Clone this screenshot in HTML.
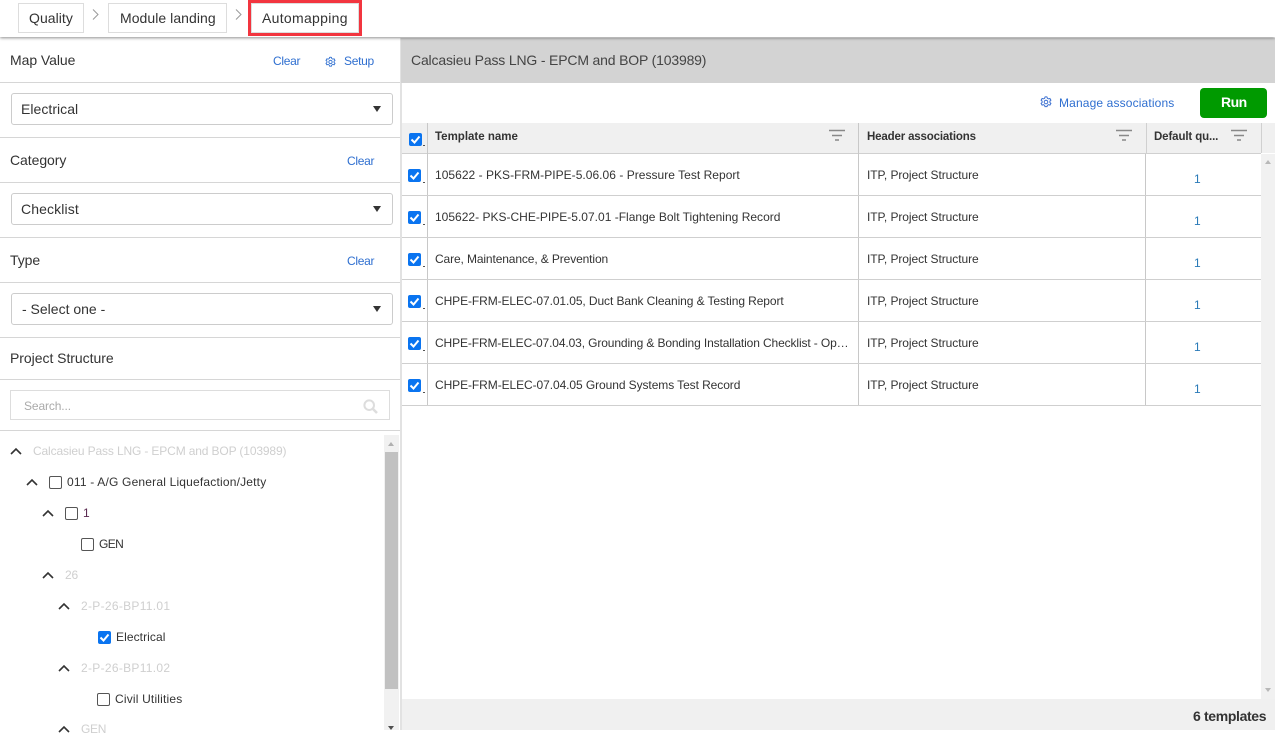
<!DOCTYPE html>
<html><head><meta charset="utf-8"><style>
html,body{margin:0;padding:0;background:#fff}
body{width:1275px;height:730px;position:relative;overflow:hidden;font-family:"Liberation Sans",sans-serif;color:#333}
.a,.t,.l{position:absolute}
.t{white-space:nowrap;line-height:16px;height:16px}
.s14{font-size:14px;letter-spacing:-.06px}
.s12{font-size:12px;letter-spacing:-.12px}
.g{color:#cfcfcf}
.bl{color:#2f6fd0}
.l{background:#d6d6d6;height:1px}
.bc{position:absolute;top:3px;height:28px;border:1px solid #ddd;background:#fff}
.sel{position:absolute;left:11px;width:380px;height:30px;border:1px solid #ccc;border-radius:3px}
.tri{position:absolute;width:0;height:0;border-left:4px solid transparent;border-right:4px solid transparent;border-top:6px solid #333}
.cb{position:absolute;width:11px;height:11px;border:1px solid #555;border-radius:2px;background:#fff}
.ck{position:absolute;width:13px;height:13px;background:#0a74f0;border-radius:2px}
.ck svg{position:absolute;left:0;top:0}
.dots{position:absolute;width:2px;height:1px;background:#555}
svg{position:absolute;overflow:visible}
</style></head><body>

<!-- Left panel -->
<div class="t s14" style="left:10px;top:52px">Map Value</div>
<div class="t s12 bl" style="left:273px;top:53px;letter-spacing:-.3px">Clear</div>
<svg style="left:325px;top:56px" width="11" height="12" viewBox="0 0 12 12" fill="none" stroke="#2f6fd0" stroke-width="1"><path d="M6 .8l1 .2.4 1.3 1.2.6 1.3-.4 1 1.7-1 .9v1.4l1 .9-1 1.7-1.3-.4-1.2.6-.4 1.3H5l-.4-1.3-1.2-.6-1.3.4-1-1.7 1-.9V5.1l-1-.9 1-1.7 1.3.4 1.2-.6L5 1z"/><circle cx="6" cy="6" r="1.8"/></svg>
<div class="t s12 bl" style="left:344px;top:53px;letter-spacing:-.3px">Setup</div>
<div class="l" style="left:0;top:82px;width:400px"></div>
<div class="sel" style="top:93px"></div>
<div class="t s14" style="left:21px;top:101px;letter-spacing:.04px">Electrical</div>
<div class="tri" style="left:373px;top:106px"></div>
<div class="l" style="left:0;top:137px;width:400px"></div>
<div class="t s14" style="left:10px;top:152px">Category</div>
<div class="t s12 bl" style="left:347px;top:153px;letter-spacing:-.3px">Clear</div>
<div class="l" style="left:0;top:182px;width:400px"></div>
<div class="sel" style="top:193px"></div>
<div class="t s14" style="left:21px;top:201px;letter-spacing:.12px">Checklist</div>
<div class="tri" style="left:373px;top:206px"></div>
<div class="l" style="left:0;top:237px;width:400px"></div>
<div class="t s14" style="left:10px;top:252px">Type</div>
<div class="t s12 bl" style="left:347px;top:253px;letter-spacing:-.3px">Clear</div>
<div class="l" style="left:0;top:282px;width:400px"></div>
<div class="sel" style="top:293px"></div>
<div class="t s14" style="left:22px;top:301px;letter-spacing:0">- Select one -</div>
<div class="tri" style="left:373px;top:306px"></div>
<div class="l" style="left:0;top:337px;width:400px"></div>
<div class="t s14" style="left:10px;top:350px;letter-spacing:-.04px">Project Structure</div>
<div class="l" style="left:0;top:379px;width:400px"></div>
<div class="a" style="left:10px;top:390px;width:378px;height:28px;border:1px solid #ddd"></div>
<div class="t s12" style="left:24px;top:398px;color:#aaa">Search...</div>
<svg style="left:363px;top:399px" width="15" height="15" viewBox="0 0 15 15" fill="none" stroke="#ddd" stroke-width="2"><circle cx="6.200" cy="6.200" r="4.800"/><path d="M10 10l4 4" stroke-width="2.600"/></svg>
<div class="l" style="left:0;top:430px;width:400px"></div>

<!-- tree -->
<svg style="left:0;top:0" width="400" height="730" fill="none" stroke="#333" stroke-width="1.6"><path d="M11 454l5-5 5 5M27 485l5-5 5 5M43 516l5-5 5 5M43 578l5-5 5 5M59 609l5-5 5 5M59 671l5-5 5 5M59 732l5-5 5 5"/></svg>
<div class="t s12 g" style="left:33px;top:443px;letter-spacing:-.14px">Calcasieu Pass LNG - EPCM and BOP (103989)</div>
<div class="cb" style="left:49px;top:476px"></div>
<div class="t s12" style="left:67px;top:474px;letter-spacing:.19px">011 - A/G General Liquefaction/Jetty</div>
<div class="cb" style="left:65px;top:507px"></div>
<div class="t s12" style="left:83px;top:505px;color:#5a2a50">1</div>
<div class="cb" style="left:81px;top:538px"></div>
<div class="t s12" style="left:99px;top:536px;letter-spacing:-.6px">GEN</div>
<div class="t s12 g" style="left:65px;top:567px">26</div>
<div class="t s12 g" style="left:81px;top:598px;letter-spacing:.3px">2-P-26-BP11.01</div>
<div class="ck" style="left:98px;top:631px"><svg width="13" height="13" fill="none" stroke="#fff" stroke-width="2"><path d="M2.500 6.500l3 3 5-6"/></svg></div>
<div class="t s12" style="left:116px;top:629px;letter-spacing:.08px">Electrical</div>
<div class="t s12 g" style="left:81px;top:660px;letter-spacing:.3px">2-P-26-BP11.02</div>
<div class="cb" style="left:97px;top:693px"></div>
<div class="t s12" style="left:115px;top:691px;letter-spacing:.18px">Civil Utilities</div>
<div class="t s12 g" style="left:81px;top:721px;letter-spacing:-.3px">GEN</div>
<div class="a" style="left:384px;top:435px;width:15px;height:295px;background:#f1f1f1"></div>
<div class="a" style="left:385px;top:452px;width:13px;height:237px;background:#c1c1c1"></div>
<div class="a" style="left:388px;top:442px;width:0;height:0;border-left:3.500px solid transparent;border-right:3.500px solid transparent;border-bottom:4px solid #b0b0b0"></div>
<div class="a" style="left:388px;top:726px;width:0;height:0;border-left:3.500px solid transparent;border-right:3.500px solid transparent;border-top:4px solid #505050"></div>

<!-- divider -->
<div class="a" style="left:400px;top:38px;width:2px;height:692px;background:#e2e2e2"></div>

<!-- right header -->
<div class="a" style="left:401px;top:38px;width:874px;height:45px;background:#d3d3d3"></div>
<div class="t s14" style="left:411px;top:52px;color:#444;letter-spacing:-.17px">Calcasieu Pass LNG - EPCM and BOP (103989)</div>
<svg style="left:1040px;top:96px" width="12" height="12" viewBox="0 0 12 12" fill="none" stroke="#3b6fd0" stroke-width="1"><path d="M6 .8l1 .2.4 1.3 1.2.6 1.3-.4 1 1.700-1 .9v1.400l1 .9-1 1.700-1.300-.4-1.200.6-.4 1.300H5l-.4-1.300-1.200-.6-1.300.4-1-1.700 1-.9V5.100l-1-.9 1-1.700 1.300.4 1.200-.6L5 1z"/><circle cx="6" cy="6" r="1.800"/></svg>
<div class="t s12 bl" style="left:1059px;top:95px;letter-spacing:.14px">Manage associations</div>
<div class="a" style="left:1200px;top:88px;width:67px;height:30px;background:#009a00;border-radius:4px"></div>
<div class="t" style="left:1221px;top:94px;color:#fff;font-size:14px;font-weight:bold;letter-spacing:-.5px">Run</div>

<!-- table head -->
<div class="a" style="left:402px;top:123px;width:873px;height:30px;background:#f0f0f0"></div>
<div class="l" style="left:402px;top:153px;width:859px;background:#d0d0d0"></div>
<div class="a" style="left:427px;top:123px;width:1px;height:283px;background:#c8c8c8"></div>
<div class="a" style="left:858px;top:123px;width:1px;height:283px;background:#c8c8c8"></div>
<div class="a" style="left:1146px;top:123px;width:1px;height:30px;background:#d0d0d0"></div>
<div class="a" style="left:1145px;top:154px;width:1px;height:252px;background:#c8c8c8"></div>
<div class="a" style="left:1261px;top:123px;width:1px;height:30px;background:#d0d0d0"></div>
<div class="ck" style="left:409px;top:133px"><svg width="13" height="13" fill="none" stroke="#fff" stroke-width="2"><path d="M2.500 6.500l3 3 5-6"/></svg></div>
<div class="dots" style="left:423px;top:145px"></div>
<div class="t" style="left:435px;top:129px;font-size:11.500px;font-weight:bold">Template name</div>
<div class="t" style="left:867px;top:129px;font-size:11.500px;font-weight:bold;letter-spacing:-.16px">Header associations</div>
<div class="t" style="left:1154px;top:129px;font-size:11.500px;font-weight:bold;letter-spacing:-.12px">Default qu...</div>
<svg style="left:0;top:0" width="1275" height="160" fill="none" stroke="#888" stroke-width="1.500"><path d="M829 130.500h16M832 135.500h10M835 140h4M1116 130.500h16M1119 135.500h10M1122 140h4M1231 130.500h16M1234 135.500h10M1237 140h4"/></svg>

<!-- rows -->
<div class="l" style="left:402px;top:195px;width:859px;background:#cfcfcf"></div>
<div class="l" style="left:402px;top:237px;width:859px;background:#cfcfcf"></div>
<div class="l" style="left:402px;top:279px;width:859px;background:#cfcfcf"></div>
<div class="l" style="left:402px;top:321px;width:859px;background:#cfcfcf"></div>
<div class="l" style="left:402px;top:363px;width:859px;background:#cfcfcf"></div>
<div class="l" style="left:402px;top:405px;width:859px;background:#cfcfcf"></div>

<div class="ck" style="left:408px;top:169px"><svg width="13" height="13" fill="none" stroke="#fff" stroke-width="2"><path d="M2.500 6.500l3 3 5-6"/></svg></div><div class="dots" style="left:423px;top:182px"></div>
<div class="ck" style="left:408px;top:211px"><svg width="13" height="13" fill="none" stroke="#fff" stroke-width="2"><path d="M2.500 6.500l3 3 5-6"/></svg></div><div class="dots" style="left:423px;top:224px"></div>
<div class="ck" style="left:408px;top:253px"><svg width="13" height="13" fill="none" stroke="#fff" stroke-width="2"><path d="M2.500 6.500l3 3 5-6"/></svg></div><div class="dots" style="left:423px;top:266px"></div>
<div class="ck" style="left:408px;top:295px"><svg width="13" height="13" fill="none" stroke="#fff" stroke-width="2"><path d="M2.500 6.500l3 3 5-6"/></svg></div><div class="dots" style="left:423px;top:308px"></div>
<div class="ck" style="left:408px;top:337px"><svg width="13" height="13" fill="none" stroke="#fff" stroke-width="2"><path d="M2.500 6.500l3 3 5-6"/></svg></div><div class="dots" style="left:423px;top:350px"></div>
<div class="ck" style="left:408px;top:379px"><svg width="13" height="13" fill="none" stroke="#fff" stroke-width="2"><path d="M2.500 6.500l3 3 5-6"/></svg></div><div class="dots" style="left:423px;top:392px"></div>

<div class="t s12" style="left:435px;top:167px;letter-spacing:.03px">105622 - PKS-FRM-PIPE-5.06.06 - Pressure Test Report</div>
<div class="t s12" style="left:435px;top:209px;letter-spacing:.01px">105622- PKS-CHE-PIPE-5.07.01 -Flange Bolt Tightening Record</div>
<div class="t s12" style="left:435px;top:251px">Care, Maintenance, &amp; Prevention</div>
<div class="t s12" style="left:435px;top:293px;letter-spacing:-.09px">CHPE-FRM-ELEC-07.01.05, Duct Bank Cleaning &amp; Testing Report</div>
<div class="t s12" style="left:435px;top:335px;width:417px;overflow:hidden;text-overflow:ellipsis">CHPE-FRM-ELEC-07.04.03, Grounding &amp; Bonding Installation Checklist - Operations and Maintenance</div>
<div class="t s12" style="left:435px;top:377px;letter-spacing:-.08px">CHPE-FRM-ELEC-07.04.05 Ground Systems Test Record</div>

<div class="t s12" style="left:867px;top:167px;letter-spacing:-.07px">ITP, Project Structure</div>
<div class="t s12" style="left:867px;top:209px;letter-spacing:-.07px">ITP, Project Structure</div>
<div class="t s12" style="left:867px;top:251px;letter-spacing:-.07px">ITP, Project Structure</div>
<div class="t s12" style="left:867px;top:293px;letter-spacing:-.07px">ITP, Project Structure</div>
<div class="t s12" style="left:867px;top:335px;letter-spacing:-.07px">ITP, Project Structure</div>
<div class="t s12" style="left:867px;top:377px;letter-spacing:-.07px">ITP, Project Structure</div>

<div class="t s12" style="left:1194px;top:171px;color:#2a7ab8">1</div>
<div class="t s12" style="left:1194px;top:213px;color:#2a7ab8">1</div>
<div class="t s12" style="left:1194px;top:255px;color:#2a7ab8">1</div>
<div class="t s12" style="left:1194px;top:297px;color:#2a7ab8">1</div>
<div class="t s12" style="left:1194px;top:339px;color:#2a7ab8">1</div>
<div class="t s12" style="left:1194px;top:381px;color:#2a7ab8">1</div>

<!-- right scrollbar -->
<div class="a" style="left:1261px;top:154px;width:14px;height:545px;background:#f1f1f1"></div>
<div class="a" style="left:1265px;top:160px;width:0;height:0;border-left:3.500px solid transparent;border-right:3.500px solid transparent;border-bottom:4px solid #b8b8b8"></div>
<div class="a" style="left:1265px;top:688px;width:0;height:0;border-left:3.500px solid transparent;border-right:3.500px solid transparent;border-top:4px solid #b8b8b8"></div>

<!-- footer -->
<div class="a" style="left:402px;top:699px;width:873px;height:31px;background:#f0f0f0"></div>
<div class="t" style="left:1193px;top:708px;font-size:14px;font-weight:bold;letter-spacing:-.35px">6 templates</div>

<!-- top bar -->
<div class="a" style="left:0;top:0;width:1275px;height:37px;background:#fff;box-shadow:0 1px 3px rgba(0,0,0,.45)"></div>
<div class="bc" style="left:18px;width:64px"></div>
<div class="t s14" style="left:29px;top:10px;letter-spacing:.05px">Quality</div>
<svg style="left:92px;top:9px" width="7" height="11" fill="none" stroke="#999"><path d="M1 .5l5 5-5 5"/></svg>
<div class="bc" style="left:108px;width:117px"></div>
<div class="t s14" style="left:120px;top:10px;letter-spacing:.05px">Module landing</div>
<svg style="left:235px;top:9px" width="7" height="11" fill="none" stroke="#999"><path d="M1 .5l5 5-5 5"/></svg>
<div class="a" style="left:248px;top:0;width:108px;height:30px;border:3px solid #f2353f;background:#fff"></div>
<div class="a" style="left:251px;top:3px;width:106px;height:28px;border:1px solid #ddd;background:#fff"></div>
<div class="t s14" style="left:262px;top:10px;letter-spacing:.3px">Automapping</div>
</body></html>
